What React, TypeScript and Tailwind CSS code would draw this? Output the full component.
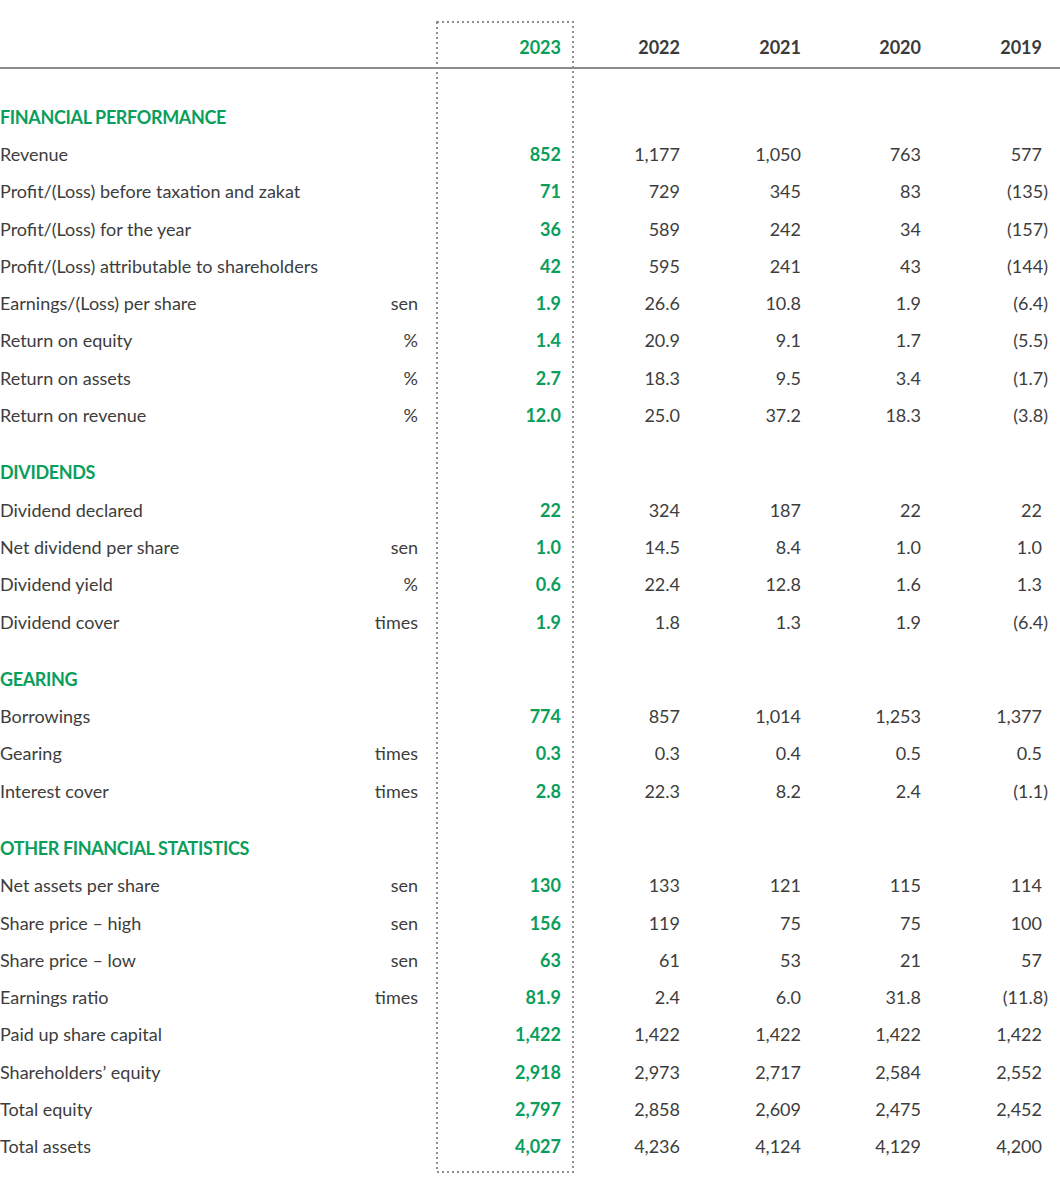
import React from "react";

type Row = { label: string; unit?: string; values: string[] };
type Section = { title: string; rows: Row[] };

const YEARS = ["2023", "2022", "2021", "2020", "2019"];

const SECTIONS: Section[] = [
  {
    title: "FINANCIAL PERFORMANCE",
    rows: [
      { label: "Revenue", values: ["852", "1,177", "1,050", "763", "577"] },
      { label: "Profit/(Loss) before taxation and zakat", values: ["71", "729", "345", "83", "(135)"] },
      { label: "Profit/(Loss) for the year", values: ["36", "589", "242", "34", "(157)"] },
      { label: "Profit/(Loss) attributable to shareholders", values: ["42", "595", "241", "43", "(144)"] },
      { label: "Earnings/(Loss) per share", unit: "sen", values: ["1.9", "26.6", "10.8", "1.9", "(6.4)"] },
      { label: "Return on equity", unit: "%", values: ["1.4", "20.9", "9.1", "1.7", "(5.5)"] },
      { label: "Return on assets", unit: "%", values: ["2.7", "18.3", "9.5", "3.4", "(1.7)"] },
      { label: "Return on revenue", unit: "%", values: ["12.0", "25.0", "37.2", "18.3", "(3.8)"] },
    ],
  },
  {
    title: "DIVIDENDS",
    rows: [
      { label: "Dividend declared", values: ["22", "324", "187", "22", "22"] },
      { label: "Net dividend per share", unit: "sen", values: ["1.0", "14.5", "8.4", "1.0", "1.0"] },
      { label: "Dividend yield", unit: "%", values: ["0.6", "22.4", "12.8", "1.6", "1.3"] },
      { label: "Dividend cover", unit: "times", values: ["1.9", "1.8", "1.3", "1.9", "(6.4)"] },
    ],
  },
  {
    title: "GEARING",
    rows: [
      { label: "Borrowings", values: ["774", "857", "1,014", "1,253", "1,377"] },
      { label: "Gearing", unit: "times", values: ["0.3", "0.3", "0.4", "0.5", "0.5"] },
      { label: "Interest cover", unit: "times", values: ["2.8", "22.3", "8.2", "2.4", "(1.1)"] },
    ],
  },
  {
    title: "OTHER FINANCIAL STATISTICS",
    rows: [
      { label: "Net assets per share", unit: "sen", values: ["130", "133", "121", "115", "114"] },
      { label: "Share price – high", unit: "sen", values: ["156", "119", "75", "75", "100"] },
      { label: "Share price – low", unit: "sen", values: ["63", "61", "53", "21", "57"] },
      { label: "Earnings ratio", unit: "times", values: ["81.9", "2.4", "6.0", "31.8", "(11.8)"] },
      { label: "Paid up share capital", values: ["1,422", "1,422", "1,422", "1,422", "1,422"] },
      { label: "Shareholders’ equity", values: ["2,918", "2,973", "2,717", "2,584", "2,552"] },
      { label: "Total equity", values: ["2,797", "2,858", "2,609", "2,475", "2,452"] },
      { label: "Total assets", values: ["4,027", "4,236", "4,124", "4,129", "4,200"] },
    ],
  },
];

const GRID = "grid grid-cols-[340px_78px_149px_119px_121px_120px_121px] items-center";

// closing bracket hangs past the column edge, like the printed table
const Num = ({ v }: { v: string }) =>
  v.endsWith(")") ? (
    <>
      {v.slice(0, -1)}
      <span className="-mr-[6px]">)</span>
    </>
  ) : (
    <>{v}</>
  );

export default function App() {
  return (
    <div className="relative w-[1060px] h-[1190px] bg-white text-[#3d3d3d] text-[18px] font-['Lato',sans-serif]">
      {/* header */}
      <div className={`${GRID} h-[67px] pt-[28px] font-bold`}>
        <div />
        <div />
        {YEARS.map((y, i) => (
          <div key={y} className={`text-right pr-[6px] ${i === 0 ? "text-[#0a9e5c]" : "text-[#3a3a3a]"}`}>
            {y}
          </div>
        ))}
      </div>
      <div className="h-[1.5px] bg-[#8c8c8c]" />

      <div className="pt-[30px]">
        {SECTIONS.map((s, si) => (
          <div key={s.title} className={si > 0 ? "mt-[20px]" : ""}>
            <div className="h-[37.3px] flex items-center font-bold tracking-[-0.02em] text-[#0a9e5c]">{s.title}</div>
            {s.rows.map((r) => (
              <div key={r.label} className={`${GRID} h-[37.3px]`}>
                <div className="whitespace-nowrap">{r.label}</div>
                <div className="text-right">{r.unit ?? ""}</div>
                {r.values.map((v, i) => (
                  <div
                    key={i}
                    className={`text-right pr-[6px] ${i === 0 ? "font-bold text-[#0a9e5c]" : ""}`}
                  >
                    <Num v={v} />
                  </div>
                ))}
              </div>
            ))}
          </div>
        ))}
      </div>

      {/* dotted highlight round the current year */}
      <svg className="absolute left-[436px] top-[21px] pointer-events-none" width="138" height="1152">
        <rect
          x="1"
          y="1"
          width="136"
          height="1150"
          fill="none"
          stroke="#8f8f8f"
          strokeWidth="2"
          strokeDasharray="2 3"
        />
      </svg>
    </div>
  );
}
